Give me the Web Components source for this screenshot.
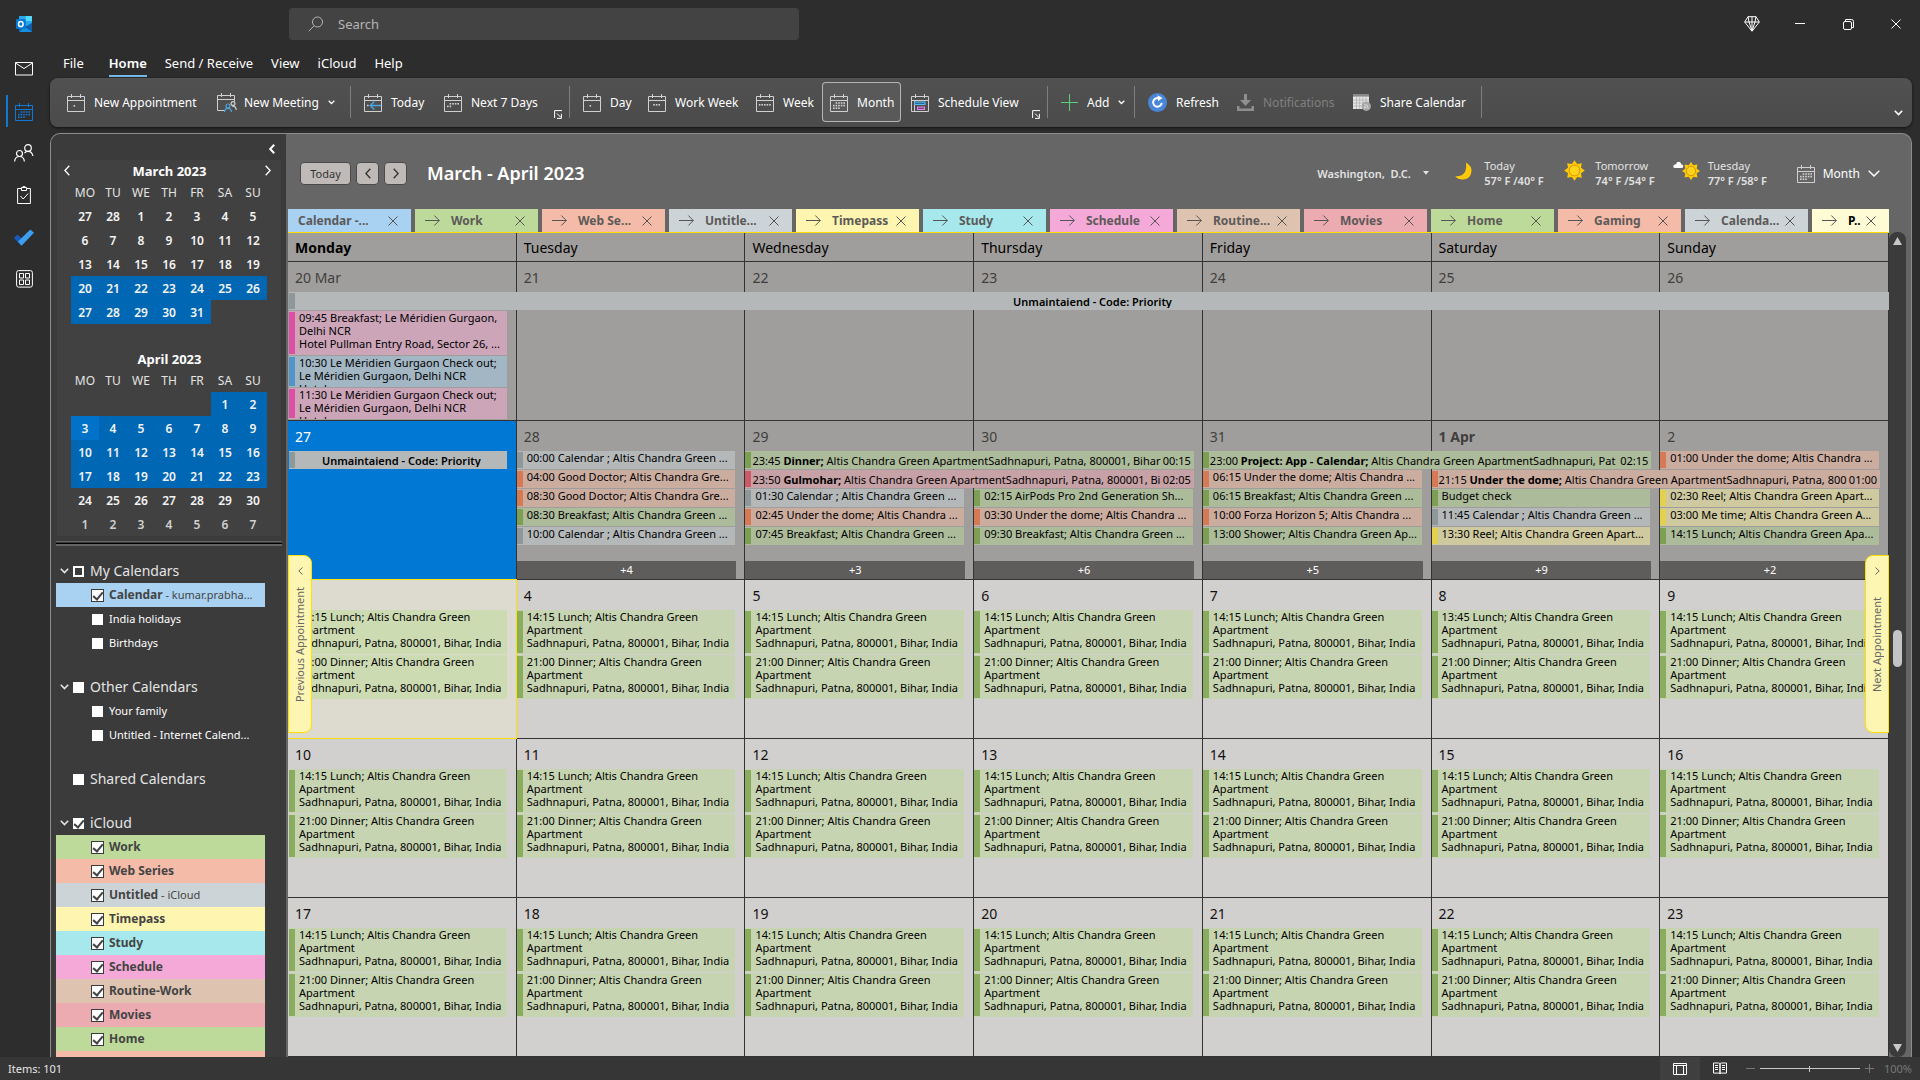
<!DOCTYPE html>
<html lang="en">
<head>
<meta charset="utf-8">
<title>Calendar - Outlook</title>
<style>
html,body{margin:0;height:100%}
body{font-family:"Noto Sans","Open Sans",sans-serif;font-size:12px;color:#fff;background:#2d2d2d;overflow:hidden}
</style>
</head>
<body>
<outlook-app></outlook-app>
<script>
const BASE='*{box-sizing:border-box}button{font:inherit;color:inherit;background:none;border:0;padding:0;margin:0;display:inline-flex;align-items:center;justify-content:center}';
function define(name,css,html){
  customElements.define(name,class extends HTMLElement{
    connectedCallback(){
      if(this.shadowRoot)return;
      const t=document.createElement('template');
      t.innerHTML='<style>'+BASE+css+'</style>'+(typeof html==='function'?html(this):html);
      this.attachShadow({mode:'open'}).append(t.content.cloneNode(true));
    }
  });
}

/* ---------- icons ---------- */
const frame='<path d="M.5 3.500h17v15H.5zM.5 7.500h17M4.500 1v4M13.500 1v4" fill="none" stroke="currentColor"/>';
const dots=(rows,c='currentColor')=>rows.map(([y,x0,n])=>Array.from({length:n},(_,i)=>`<rect x="${x0+i*2.6}" y="${y}" width="1.6" height="1.6" fill="${c}"/>`).join('')).join('');
const sun=(cx,cy,r)=>{let p='';for(let i=0;i<16;i++){const a=i*Math.PI/8-Math.PI/2,q=i%2?r*.68:r;p+=(i?'L':'M')+(cx+q*Math.cos(a)).toFixed(1)+' '+(cy+q*Math.sin(a)).toFixed(1)}
  return `<path d="${p}z" fill="#ffc905"/><circle cx="${cx}" cy="${cy}" r="${r*.52}" fill="#ffd21c" stroke="#c99200" stroke-width=".9"/>`};
const ICONS={
 outlook:[16,16,'<rect x="3" y="0" width="13" height="15.5" rx="1" fill="#1066b5"/><rect x="3" y="0" width="6.5" height="5" fill="#28a8ea"/><rect x="9.500" y="0" width="6.5" height="5" fill="#50d9ff"/><rect x="9.5" y="5" width="6.5" height="5" fill="#28a8ea"/><path d="M3 16l6-5 7-4v8.500q0 .5-.5.5z" fill="#1490df"/><path d="M16 7v9l-7-5z" fill="#0f5ea8"/><rect x="0" y="3" width="9.500" height="10" rx="1" fill="#0078d4"/><ellipse cx="4.800" cy="8" rx="2.300" ry="2.600" fill="none" stroke="#fff" stroke-width="1.500"/>'],
 mail:[18,14,'<path d="M.5.500h17v12.500H.5zM.5 1l8.500 5.500L17.500 1" fill="none" stroke="currentColor"/>'],
 cal:[18,19,frame+dots([[9.2,5.600,4],[11.800,3,5],[14.400,3,3]])],
 people:[20,18,'<g fill="none" stroke="currentColor" stroke-width="1.200"><circle cx="14" cy="4" r="3.300"/><circle cx="5.500" cy="9.500" r="3"/><path d="M.6 17.500q.5-5 4.900-5t4.900 5M10.500 9q1.500-1.700 3.500-1.700 4 0 4.900 4.700"/></g>'],
 tasks:[14,18,'<g fill="none" stroke="currentColor"><path d="M4 2.500H.6v15h12.800v-15H10"/><path d="M4.500 4.500v-3h5v3zM3.500 10l2.700 3 5-5.500"/><path d="M5.500 1q1.500-1.200 3 0"/></g>'],
 todo:[20,17,'<path d="M0 9l3.500-3.500L10 12l-3.500 4z" fill="#185abd"/><path d="M4 12.500L16.300.5l3.700 3.300-12.500 13z" fill="#3d9ff0"/>'],
 apps:[17,18,'<g fill="none" stroke="currentColor"><rect x=".6" y=".6" width="15.800" height="16.500" rx="2"/><path d="M3.500 3.500h4v4.500h-4zM9.500 3.500h4v4.500h-4zM3.500 10h4v4.500h-4zM9.500 10h4v4.500h-4z"/></g>'],
 search:[16,16,'<g fill="none" stroke="currentColor"><circle cx="9.500" cy="6" r="5"/><path d="M6 9.800L.8 15.200"/></g>'],
 diamond:[16,16,'<path d="M4 .7h8L15.300 6 8 15.300.7 6zM.7 6h14.600M4 .7L5 6l3 9M12 .7L11 6l-3 9M8 .7V15" fill="none" stroke="currentColor" stroke-width="1"/>'],
 min:[10,10,'<path d="M0 4.500h10" stroke="currentColor"/>'],
 restore:[11,11,'<path d="M2.500 2.500V.5h6q2 0 2 2v6h-2M.5 4q0-1.500 1.500-1.500h5q1.500 0 1.500 1.500v5q0 1.500-1.500 1.500H2Q.5 10.500.5 9z" fill="none" stroke="currentColor"/>'],
 close:[10,10,'<path d="M.5.500l9 9M9.500.500l-9 9" stroke="currentColor"/>'],
 day:[18,19,frame+dots([[12,6.500,1]])],
 meeting:[18,20,'<path d="M8 18.500H.5v-15h17v6M.5 7.500h17M4.500 1v4M13.500 1v4" fill="none" stroke="#d0d0d0"/><g fill="none" stroke-width="1.200"><g stroke="#4ea5e0"><circle cx="11" cy="14" r="2"/><path d="M7.500 20q.3-3.700 3.500-3.700t3.500 3.700"/></g><g stroke="#d0d0d0"><circle cx="16" cy="11.500" r="1.900"/><path d="M15 14.200q3.700-.8 4.300 3.800"/></g></g>'],
 today:[18,19,frame+'<path d="M17 12.500H6.500m3.800-4l-4 4 4 4" fill="none" stroke="#4ea5e0" stroke-width="1.400"/>'+dots([[11.700,3,1]])],
 next7:[18,19,frame+dots([[10,5.600,4],[12.600,3,2]])],
 work:[18,19,frame+dots([[11,5.200,3]])],
 week:[18,19,frame+dots([[11,2.800,5]])],
 sched:[18,19,frame+'<path d="M3.500 8v10" stroke="currentColor"/><rect x="3.500" y="9" width="10.500" height="2.500" fill="#2b6f9e" stroke="#5bb7f0"/><rect x="6.500" y="14" width="7" height="2.500" fill="#8d3e93" stroke="#d58be0"/>'],
 plus:[17,17,'<path d="M8.500 0v17M0 8.500h17" stroke="#5fd07a" stroke-width="1"/>'],
 refresh:[19,19,'<circle cx="9.500" cy="9.500" r="9.500" fill="#4a86d8"/><path d="M13.700 9.800a4.300 4.300 0 1 1-3-4.500" fill="none" stroke="#fff" stroke-width="2"/><path d="M9.500 2.300l5 2.700-4.500 3.300z" fill="#fff"/>'],
 notif:[17,17,'<path d="M7 0h3v6h4l-5.500 6L3 6h4zM0 12h2.500v2.500h12V12H17v5H0z" fill="#8e8e8e"/>'],
 share:[18,18,'<rect x="0" y="1" width="16" height="15" fill="#e6e6e6"/><rect x="0" y="1" width="16" height="2.600" fill="#8a8a8a"/><path d="M0 7h16M0 10h16M0 13h16M3.500 4v12M6.700 4v12M9.900 4v12M13 4v12" stroke="#aaa" stroke-width=".7"/><circle cx="13.300" cy="13.300" r="4.700" fill="#a6a6a6"/><path d="M11.500 15.500v-1.700m0-2.500q3.700.2 3.700 4.200m-3.700-2.200q1.700.2 1.700 2.200" fill="none" stroke="#e8e8e8" stroke-width=".8"/>'],
 launch:[8,9,'<path d="M.6 8V.6H8M3 3.500l4 4M7.400 3.800v4.600H3" fill="none" stroke="currentColor"/>'],
 down:[7,5,'<path d="M.7.7l2.800 2.800L6.300.7" fill="none" stroke="currentColor" stroke-width="1.300"/>'],
 downB:[9,6,'<path d="M.8.800l3.700 3.700L8.200.8" fill="none" stroke="currentColor" stroke-width="1.600"/>'],
 downL:[12,7,'<path d="M.7.700L6 6 11.300.7" fill="none" stroke="currentColor" stroke-width="1.500"/>'],
 left:[6,11,'<path d="M5.300.700L.9 5.500l4.400 4.800" fill="none" stroke="currentColor" stroke-width="1.300"/>'],
 right:[6,11,'<path d="M.7.700l4.400 4.800L.7 10.300" fill="none" stroke="currentColor" stroke-width="1.300"/>'],
 leftB:[6,10,'<path d="M5.200.800L1.200 5l4 4.200" fill="none" stroke="currentColor" stroke-width="2"/>'],
 leftS:[5,8,'<path d="M4.500.500L.8 4l3.700 3.500" fill="none" stroke="currentColor"/>'],
 rightS:[5,8,'<path d="M.5.500L4.200 4 .5 7.500" fill="none" stroke="currentColor"/>'],
 arrow:[15,12,'<path d="M0 5.500h14.300M9.300.500L14.300 5.500l-5 5" fill="none" stroke="currentColor"/>'],
 caret:[6,4,'<path d="M0 0h6L3 3.800z" fill="currentColor"/>'],
 moon:[17,18,'<path d="M11 .5q6 3.500 5.500 9-1 7.500-8 8Q3 17.800.3 14.200q8 .3 10-5 1.500-4 .7-8.700z" fill="#ffc905"/>'],
 sun:[21,21,sun(10.500,10.500,10.300)],
 partly:[27,21,sun(18,11,9)+'<path d="M2.500 8Q0 8 .3 6 .7 4.300 3 4.300 4 1.300 6.500 2q1.700.7 1.900 2.500 2 .2 1.900 2Q10 8 8.500 8z" fill="#fff"/>'],
 layout:[14,12,'<path d="M.5.500h13v11H.5zM.5 2.500h13M3.500 2.500v9M10.500 2.500v9" fill="none" stroke="currentColor"/>'],
 read:[14,13,'<path d="M.5 1h5q1.500 0 1.500 1v10q0-.9-1.500-.9h-5zM13.500 1h-5Q7 1 7 2v10q0-.9 1.500-.9h5zM2 3.500h3M2 5.500h3M2 7.500h3M9 3.500h3M9 5.500h3M9 7.500h3" fill="none" stroke="currentColor"/>'],
 tri:[9,8,'<path d="M4.500 0L9 8H0z" fill="currentColor"/>'],
 triD:[9,8,'<path d="M4.500 8L0 0h9z" fill="currentColor"/>']
};
define('ui-icon',':host{display:inline-flex;flex:none}svg{display:block;overflow:visible}',h=>{const[w,ht,b]=ICONS[h.getAttribute('name')];
  return `<svg width="${w}" height="${ht}" viewBox="0 0 ${w} ${ht}" aria-hidden="true">${b}</svg>`});

/* ---------- left rail ---------- */
define('rail-item',`:host{display:flex;height:42px;position:relative}button{flex:1;padding-right:2px}
:host([active]){color:#0f78d4}:host([active])::before{content:"";position:absolute;left:6px;top:5px;width:2px;height:32px;background:#0f78d4}`,
 h=>`<button aria-label="${h.getAttribute('label')}"><ui-icon name="${h.getAttribute('icon')}"></ui-icon></button>`);
define('nav-rail',':host{display:flex;flex-direction:column;width:50px;flex:none}.logo{height:48px;display:flex;align-items:center;justify-content:center;padding-right:2px}',
 `<div class="logo"><ui-icon name="outlook"></ui-icon></div>
 <rail-item icon="mail" label="Mail"></rail-item><rail-item icon="cal" label="Calendar" active></rail-item><rail-item icon="people" label="People"></rail-item>
 <rail-item icon="tasks" label="Tasks"></rail-item><rail-item icon="todo" label="To Do"></rail-item><rail-item icon="apps" label="More apps"></rail-item>`);

/* ---------- title bar + menu ---------- */
define('title-bar',`:host{display:flex;height:48px;align-items:center}
label{display:flex;align-items:center;gap:14px;margin-left:239px;width:510px;height:32px;padding:0 19px;background:#434343;border-radius:4px;color:#b5b5b5}
input{flex:1;background:none;border:0;outline:0;font:inherit;font-size:13px;color:inherit;padding:0}input::placeholder{color:#b5b5b5;opacity:1}
.win{margin-left:auto;display:flex}.win button{width:48px;height:32px}`,
 `<label><ui-icon name="search"></ui-icon><input type="search" placeholder="Search" aria-label="Search"></label>
 <div class="win"><button aria-label="Premium"><ui-icon name="diamond"></ui-icon></button><button aria-label="Minimize"><ui-icon name="min"></ui-icon></button><button aria-label="Restore"><ui-icon name="restore"></ui-icon></button><button aria-label="Close"><ui-icon name="close"></ui-icon></button></div>`);
define('menu-bar',`:host{display:flex;height:30px;padding-left:13px;align-items:center;font-size:13px}
nav{display:flex;gap:18px}button{height:24px;line-height:24px}.on{font-weight:600;box-shadow:0 2px #76b9ed;margin-left:7px}`,
 `<nav><button>File</button><button class="on">Home</button><button>Send / Receive</button><button>View</button><button>iCloud</button><button>Help</button></nav>`);

/* ---------- ribbon ---------- */
define('rb-button',`:host{display:flex;align-items:center;height:40px}
button{height:40px;width:100%;justify-content:flex-start;gap:9px;padding:0 0 0 8px;white-space:nowrap;border-radius:4px;color:#fff}
:host([pressed]){margin-right:2px}:host([pressed]) button{background:#595959;box-shadow:inset 0 0 0 1px #b4b4b4}:host([off]) button{color:#808080}ui-icon{color:#d0d0d0}
.dd{color:#fff}`,
 h=>{h.style.minWidth=h.getAttribute('w')+'px';
  return `<button ${h.hasAttribute('off')?'disabled':''}><ui-icon name="${h.getAttribute('icon')}"></ui-icon><slot></slot>${h.hasAttribute('dd')?'<ui-icon class="dd" name="down"></ui-icon>':''}</button>`});
define('ribbon-bar',`:host{display:flex;align-items:center;height:49px;margin-right:8px;padding:0 9px 1px;background:linear-gradient(#515151,#4b4b4b);border-radius:8px;box-shadow:0 1px 3px #111}
hr{width:1px;height:32px;border:0;background:#7e7e7e;margin:0 5px 0 7px}.l{align-self:flex-end;margin:0 0 7px 8px}.c{margin-left:auto;align-self:flex-end;margin-bottom:10px}`,
 `<rb-button icon="day" w="150">New Appointment</rb-button><rb-button icon="meeting" dd w="134">New Meeting</rb-button><hr>
 <rb-button icon="today" w="80">Today</rb-button><rb-button icon="next7" w="110">Next 7 Days</rb-button><button class="l" aria-label="Go to options"><ui-icon name="launch"></ui-icon></button><hr>
 <rb-button icon="day" w="65">Day</rb-button><rb-button icon="work" w="108">Work Week</rb-button><rb-button icon="week" w="74">Week</rb-button><rb-button icon="cal" pressed w="79">Month</rb-button><rb-button icon="sched" w="121">Schedule View</rb-button><button class="l" aria-label="Arrange options"><ui-icon name="launch"></ui-icon></button><hr>
 <rb-button icon="plus" dd w="74">Add</rb-button><hr><rb-button icon="refresh" w="89">Refresh</rb-button><rb-button icon="notif" off w="116">Notifications</rb-button><rb-button icon="share" w="129">Share Calendar</rb-button><hr>
 <button class="c" aria-label="Ribbon options"><ui-icon name="downB"></ui-icon></button>`);

/* ---------- sidebar ---------- */
define('mini-month',`:host{display:block;padding:0 14px}
header{display:flex;align-items:center;height:21px;margin:0 -8px 0 -7px;font-weight:700;font-size:13px}header span{flex:1;text-align:center}header ui-icon{width:10px}
table{border-collapse:collapse;width:100%;table-layout:fixed}th,td{padding:0;text-align:center;font-size:12px;height:24px;line-height:17px}th{height:23px;font-weight:400;color:#e4e4e4}td{font-weight:600;color:#f4f4f4}
.s{background:#0067b5}.t{background:#0072c9}.o{color:#d0d0d0}`,
 h=>{const n=h.hasAttribute('nav'),d=h.getAttribute('days').split(',');let r='';
  d.forEach((x,i)=>{if(i%7==0)r+='<tr>';const m=x.match(/^(\d*)(\w*)$/);r+=`<td class="${[...m[2]].join(' ')}">${m[1]}</td>`;if(i%7==6)r+='</tr>'});
  return `<header>${n?'<button aria-label="Previous month"><ui-icon name="left"></ui-icon></button>':''}<span>${h.getAttribute('month')}</span>${n?'<button aria-label="Next month"><ui-icon name="right"></ui-icon></button>':''}</header>
  <table><thead><tr>${['MO','TU','WE','TH','FR','SA','SU'].map(x=>`<th>${x}</th>`).join('')}</tr></thead><tbody>${r}</tbody></table>`});
const CHECK=`input{appearance:none;margin:0;flex:none;background:#fff;display:grid;place-items:center}
input:checked::before{content:"";width:4px;height:8px;margin-bottom:3px;border:solid #444;border-width:0 2px 2px 0;transform:rotate(40deg)}`;
define('cal-item',CHECK+`:host{display:block}label{display:flex;align-items:center;height:24px;padding-left:35px;gap:5px;background:var(--c,transparent);font-size:11px;white-space:nowrap;color:#fff}
input{width:13px;height:13px;background-clip:padding-box;border:1px solid #3b3b3b}span{padding-bottom:1px}
:host([on]) label{color:#444}:host([on]) b{font-size:12px;font-weight:700}b{font-weight:400}small{font-size:11px}`,
 h=>`<label style="${h.hasAttribute('c')?'--c:'+h.getAttribute('c'):''}"><input type="checkbox" ${h.hasAttribute('on')?'checked':''}><span><b>${h.getAttribute('name')}</b>${h.hasAttribute('sub')?' - <small>'+h.getAttribute('sub')+'</small>':''}</span></label>`);
define('cal-group',CHECK+`:host{display:block;margin-bottom:20px}.h{display:flex;align-items:center;height:24px;padding-left:4px;font-size:14px;color:#e4e4e4}
label{display:flex;align-items:center;gap:6px}input{width:11px;height:11px}.g{width:13px;display:flex}:host([mixed]) input{background:#3b3b3b;border:2px solid #fff}span{padding-bottom:2px}`,
 h=>`<div class="h"><div class="g">${h.hasAttribute('leaf')?'':'<button aria-label="Collapse group"><ui-icon name="downB"></ui-icon></button>'}</div><label><input type="checkbox" ${h.hasAttribute('on')?'checked':''}><span>${h.getAttribute('name')}</span></label></div><slot></slot>`);
const seq=(a,b,c='')=>Array.from({length:b-a+1},(_,i)=>a+i+c).join(',');
define('side-bar',`:host{display:flex;flex-direction:column;width:235px;flex:none;background:#3b3b3b;overflow:hidden}
.top{height:26px;display:flex;justify-content:flex-end;padding:3px 11px 0 0;flex:none}
.nav{background:#414141;margin:0 5px 0 6px;flex:none}.nav mini-month+mini-month{margin-top:24px}
.split{height:5px;margin:5px 4px 13px 5px;border:solid #646464;border-width:1px 0 2px;flex:none;background:linear-gradient(#3b3b3b 50%,#000 50%)}
.list{padding:0 21px 0 5px}`,
 `<div class="top"><button aria-label="Minimize folder pane"><ui-icon name="leftB"></ui-icon></button></div>
 <div class="nav"><mini-month nav month="March 2023" days="${seq(27,28)},${seq(1,19)},${seq(20,31,'s')},,"></mini-month>
 <mini-month month="April 2023" days=",,,,,${seq(1,2,'s')},3t,${seq(4,23,'s')},${seq(24,30)},${seq(1,7,'o')}"></mini-month></div>
 <div class="split"></div>
 <div class="list">
 <cal-group name="My Calendars" mixed><cal-item on c="#a8d1f2" name="Calendar" sub="kumar.prabha..."></cal-item><cal-item name="India holidays"></cal-item><cal-item name="Birthdays"></cal-item></cal-group>
 <cal-group name="Other Calendars"><cal-item name="Your family"></cal-item><cal-item name="Untitled" sub="Internet Calend..."></cal-item></cal-group>
 <cal-group name="Shared Calendars" leaf></cal-group>
 <cal-group name="iCloud" on>${[['Work','#bdda9b'],['Web Series','#f4bba8'],['Untitled','#cdd4d7','iCloud'],['Timepass','#fdf5b0'],['Study','#a6e8ec'],['Schedule','#f5a9d9'],['Routine-Work','#dec3b1'],['Movies','#ecaab1'],['Home','#bdda9b'],['Gaming','#f4bba8']].map(([n,c,s])=>`<cal-item on name="${n}" c="${c}" ${s?`sub="${s}"`:''}></cal-item>`).join('')}</cal-group>
 </div>`);

/* ---------- calendar header ---------- */
define('weather-day',`:host{display:flex;align-items:center;width:93px;font-size:11px;line-height:15px;color:#e2e2e2;gap:8px}.i{width:28px;display:flex;justify-content:center;padding-bottom:5px}b{display:block;font-weight:600;white-space:nowrap}`,
 h=>`<span class="i"><ui-icon name="${h.getAttribute('icon')}"></ui-icon></span><div><slot></slot><b>${h.getAttribute('temp')}</b></div>`);
define('view-header',`:host{display:flex;align-items:center;height:75px;padding:3px 31px 0 12px}
.b{height:23px;background:#bfbab8;color:#333;border:1px solid #4a4a4a;border-radius:4px;font-size:11px}.b+.b{margin-left:5px}
.t{width:51px}.n{width:23px}h1{margin:0 auto 0 20px;font-size:18px;font-weight:600;line-height:24px}
.city{font-size:11px;font-weight:600;color:#e2e2e2;gap:12px;white-space:pre}.w{display:flex;gap:18px;margin-left:22px}.v{gap:8px;margin-left:31px}.v ui-icon:first-child{color:#d0d0d0}`,
 `<button class="b t">Today</button><button class="b n" aria-label="Back"><ui-icon name="left"></ui-icon></button><button class="b n" aria-label="Forward"><ui-icon name="right"></ui-icon></button>
 <h1>March - April 2023</h1><button class="city">Washington,  D.C.<ui-icon name="caret"></ui-icon></button>
 <div class="w"><weather-day icon="moon" temp="57° F /40° F">Today</weather-day><weather-day icon="sun" temp="74° F /54° F">Tomorrow</weather-day><weather-day icon="partly" temp="77° F /58° F">Tuesday</weather-day></div>
 <button class="v"><ui-icon name="cal"></ui-icon>Month<ui-icon name="downL"></ui-icon></button>`);
define('cal-tab',`:host{display:flex;align-items:center;width:123px;height:23px;flex:none;padding:0 13px 0 10px;background:var(--c);color:#5c5a58;font-weight:700;font-size:12px;white-space:nowrap}
:host([last]){width:auto;flex:1;color:#000}ui-icon{color:#555}.a{margin-right:11px}span{flex:1;min-width:0}`,
 h=>`${h.hasAttribute('first')?'':'<ui-icon class="a" name="arrow"></ui-icon>'}<span><slot></slot></span><button aria-label="Close"><ui-icon name="close"></ui-icon></button>`);

/* ---------- month grid ---------- */
/* category colours: [body, leading bar] */
const PAL={g:['#acbb9a','#7c9f54'],o:['#cbada0','#d67a55'],s:['#b4b8b9','#8e9799'],r:['#c6a1a5','#cb5a66'],y:['#cfc99f','#e3d04f'],p:['#cca5b9','#dc4fa5'],b:['#a3b6c4','#5094c8'],G:['#c7d4b2','#8aac5f']};
define('cal-event',`:host{display:flex;min-width:0;margin-right:10px;overflow:hidden;background:var(--bg);color:#000;font-size:11px;line-height:13px}
:host::before{content:"";flex:none;width:6px;background:var(--bar);margin:1px 0}:host([first]){margin-left:1px}
.t{flex:1;min-width:0;padding:0 0 0 4px;white-space:pre;overflow:hidden}
:host([span]){margin-right:9px}:host([span]) .t,:host([mid]) .t{align-self:center;padding:0 0 0 1px}:host([mid]) .t{text-align:center}:host([span]) .t:last-child{flex:none;padding:0 3px 0 2px}
:host([span]) b{font-weight:600}:host([mid]) .t{font-weight:600}:host([full]){margin-right:0}`,
 h=>{const[a,b]=PAL[h.getAttribute('k')];h.style.setProperty('--bg',h.hasAttribute('today')?'#cddbb3':a);h.style.setProperty('--bar',b);
  return `<div class="t"><slot></slot></div>${h.hasAttribute('end')?`<div class="t">${h.getAttribute('end')}</div>`:''}`});
define('week-row',`:host{display:grid;grid-template-columns:repeat(7,minmax(0,1fr));flex:1;row-gap:1px;min-height:0}
.d{grid-row:1/-1;border:solid #333;border-width:0 1px 1px 0;padding:6px 0 0 7px;font-size:14px;line-height:20px}
.past{background:#a09e9c;color:#3f3e3d}.next{background:#d2d0ce;color:#111}.sel{background:#0078d4;color:#fff}.today{background:#dddad0;color:#111;box-shadow:0 -1px #ffe000;border-color:#ffe000;z-index:1}
.m{font-weight:700}.more{margin:0 9px 1px 0;background:#5f5d5b;color:#fff;font-size:11px;line-height:18px}
cal-event{z-index:2}`,
 h=>{const w=WEEKS[+h.getAttribute('i')];h.style.gridTemplateRows=w.rows;const n=w.rows.split(' ').length;
  return w.days.map((d,c)=>`<div class="d ${w.cls[c]||w.cls[0]} ${/^1 /.test(d)?'m':''}" style="grid-column:${c+1}">${d}</div>`).join('')
  +w.ev.map(([c,r,k,t,o={}])=>`<cal-event k="${k}" style="grid-column:${c}/span ${o.span||1};grid-row:${r+1}" ${c==1?'first':''} ${o.attr||''} ${o.end?`span end="${o.end}"`:''}>${t}</cal-event>`).join('')
  +(w.more||[]).map(([c,n2])=>`<button class="more" style="grid-column:${c};grid-row:${n}">${n2}</button>`).join('')});
const alt=(t,n)=>`${t} ${n}; Altis Chandra Green\nApartment\nSadhnapuri, Patna, 800001, Bihar, India`;
const plain=(s,cls)=>({rows:'29px 44px 44px 1fr',cls,days:Array.from({length:7},(_,i)=>s+i),
  ev:Array.from({length:7},(_,i)=>[[i+1,1,'G',alt(s+i==8?'13:45':'14:15','Lunch'),{attr:s+i==3?'today':''}],[i+1,2,'G',alt('21:00','Dinner'),{attr:s+i==3?'today':''}]]).flat()});
const A='Altis Chandra Green ApartmentSadhnapuri, ';
const WEEKS=[
 {rows:'29px 18px 44px 31px 31px 1fr',cls:['past'],days:['20 Mar',21,22,23,24,25,26],ev:[
  [1,1,'s','Unmaintaiend - Code: Priority',{span:7,attr:'mid full'}],
  [1,2,'p','09:45 Breakfast; Le Méridien Gurgaon,\nDelhi NCR\nHotel Pullman Entry Road, Sector 26, ...'],
  [1,3,'b','10:30 Le Méridien Gurgaon Check out;\nLe Méridien Gurgaon, Delhi NCR\nHotel'],
  [1,4,'p','11:30 Le Méridien Gurgaon Check out;\nLe Méridien Gurgaon, Delhi NCR\nHotel']]},
 {rows:'29px 18px 18px 18px 18px 18px 1fr 19px',cls:['sel','past','past','past','past','past','past'],days:[27,28,29,30,31,'1 Apr',2],ev:[
  [1,1,'s','Unmaintaiend - Code: Priority',{attr:'mid'}],
  [2,1,'s','00:00 Calendar ; Altis Chandra Green ...'],[2,2,'o','04:00 Good Doctor; Altis Chandra Gre...'],[2,3,'o','08:30 Good Doctor; Altis Chandra Gre...'],[2,4,'g','08:30 Breakfast; Altis Chandra Green ...'],[2,5,'s','10:00 Calendar ; Altis Chandra Green ...'],
  [3,1,'g','23:45 <b>Dinner;</b> '+A+'Patna, 800001, Bihar',{span:2,end:'00:15'}],[3,2,'r','23:50 <b>Gulmohar;</b> '+A+'Patna, 800001, Bi',{span:2,end:'02:05'}],
  [3,3,'s','01:30 Calendar ; Altis Chandra Green ...'],[3,4,'o','02:45 Under the dome; Altis Chandra ...'],[3,5,'g','07:45 Breakfast; Altis Chandra Green ...'],
  [4,3,'g','02:15 AirPods Pro 2nd Generation Sh...'],[4,4,'o','03:30 Under the dome; Altis Chandra ...'],[4,5,'g','09:30 Breakfast; Altis Chandra Green ...'],
  [5,1,'g','23:00 <b>Project: App - Calendar;</b> '+A+'Pat',{span:2,end:'02:15'}],[5,2,'o','06:15 Under the dome; Altis Chandra ...'],[5,3,'g','06:15 Breakfast; Altis Chandra Green ...'],[5,4,'o','10:00 Forza Horizon 5; Altis Chandra ...'],[5,5,'g','13:00 Shower; Altis Chandra Green Ap...'],
  [6,2,'o','21:15 <b>Under the dome;</b> '+A+'Patna, 800',{span:2,end:'01:00'}],[6,3,'g','Budget check'],[6,4,'s','11:45 Calendar ; Altis Chandra Green ...'],[6,5,'y','13:30 Reel; Altis Chandra Green Apart...'],
  [7,1,'o','01:00 Under the dome; Altis Chandra ...'],[7,3,'y','02:30 Reel; Altis Chandra Green Apart...'],[7,4,'y','03:00 Me time; Altis Chandra Green A...'],[7,5,'g','14:15 Lunch; Altis Chandra Green Apa...']],
  more:[[2,'+4'],[3,'+3'],[4,'+6'],[5,'+5'],[6,'+9'],[7,'+2']]},
 plain(3,['today','next','next','next','next','next','next']),plain(10,['next']),plain(17,['next'])];
WEEKS[2].days[0]='';
define('edge-tab',`:host{position:absolute;top:322px;z-index:5;display:block}:host([side=prev]){left:0}:host([side=next]){right:0}
button{width:24px;height:178px;flex-direction:column;justify-content:flex-start;padding-top:11px;gap:12px;background:#fdf6b2;border:1px solid #ffe000;color:#666;font-size:11px}
:host([side=prev]) button{border-radius:0 8px 8px 0}:host([side=next]) button{border-radius:8px 0 0 8px;gap:22px}
span{writing-mode:vertical-rl;rotate:180deg;line-height:16px}`,
 h=>`<button><ui-icon name="${h.getAttribute('side')=='prev'?'leftS':'rightS'}"></ui-icon><span><slot></slot></span></button>`);
define('month-grid',`:host{display:flex;flex-direction:column;flex:1;min-width:0;position:relative;border-top:1px solid #ffe000}
.h{display:grid;grid-template-columns:repeat(7,minmax(0,1fr));height:29px;flex:none;background:#a09e9c;color:#000;font-size:14px;line-height:29px}
.h div{height:29px;padding-left:7px;border:solid #333;border-width:0 1px 1px 0}.h div:first-child{font-weight:700}`,
 `<div class="h">${['Monday','Tuesday','Wednesday','Thursday','Friday','Saturday','Sunday'].map(d=>`<div>${d}</div>`).join('')}</div>
 ${[0,1,2,3,4].map(i=>`<week-row i="${i}"></week-row>`).join('')}
 <edge-tab side="prev">Previous Appointment</edge-tab><edge-tab side="next">Next Appointment</edge-tab>`);
define('scroll-rail',`:host{display:flex;flex-direction:column;align-items:center;width:17px;flex:none;background:#3b3b3b;border-radius:8px;padding:5px 0;color:#c8c8c8}
i{width:9px;height:37px;border-radius:5px;background:#c4c4c4}.a{flex:385}.b{flex:377}`,
 `<ui-icon name="tri"></ui-icon><div class="a"></div><i></i><div class="b"></div><ui-icon name="triD"></ui-icon>`);
define('calendar-view',`:host{display:flex;flex-direction:column;flex:1;min-width:0;margin-left:2px}
.tabs{display:flex;gap:4px;margin-right:22px}.body{display:flex;flex:1;min-height:0;padding-right:5px}`,
 `<view-header></view-header><div class="tabs">${[['Calendar -...','#a8d1f2'],['Work','#bdda9b'],['Web Se...','#f4bba8'],['Untitle...','#cdd4d7'],['Timepass','#fdf5b0'],['Study','#a6e8ec'],['Schedule','#f5a9d9'],['Routine...','#dec3b1'],['Movies','#ecaab1'],['Home','#bdda9b'],['Gaming','#f4bba8'],['Calenda...','#cdd4d7'],['P..','#fffbd5']].map(([n,c],i,a)=>`<cal-tab style="--c:${c}" ${i?'':'first'} ${i==a.length-1?'last':''}>${n}</cal-tab>`).join('')}</div>
 <div class="body"><month-grid></month-grid><scroll-rail></scroll-rail></div>`);

/* ---------- status bar + shell ---------- */
define('status-bar',`:host{display:flex;align-items:center;height:23px;background:#363636;padding:0 8px;flex:none;color:#e6e6e6;font-size:11px}
.v{width:40px;height:23px;color:#fff}.on{background:#3f3f3f}.v:first-of-type{margin-left:auto}
.z{display:flex;align-items:center;gap:5px;margin-left:6px;color:#777}input{appearance:none;width:100px;height:8px;margin:0;background:linear-gradient(#c8c8c8,#c8c8c8) center/100% 1px no-repeat}
input::-webkit-slider-thumb{appearance:none;width:1px;height:6px;background:#c8c8c8}.z button{width:9px;height:9px}output{margin-left:5px}`,
 `<span>Items: 101</span><button class="v on" aria-label="Normal view"><ui-icon name="layout"></ui-icon></button><button class="v" aria-label="Reading view"><ui-icon name="read"></ui-icon></button>
 <div class="z"><button aria-label="Zoom out"><svg width="9" height="9"><path d="M0 4.500h9" stroke="#777"/></svg></button><input type="range" aria-label="Zoom" value="50"><button aria-label="Zoom in"><svg width="9" height="9"><path d="M0 4.500h9M4.500 0v9" stroke="#777"/></svg></button><output>100%</output></div>`);
define('outlook-app',`:host{display:flex;flex-direction:column;height:100vh}
.m{display:flex;flex:1;min-height:0}.c{display:flex;flex-direction:column;flex:1;min-width:0}
.p{display:flex;flex:1;min-height:0;margin:6px 8px 0 0;background:#666;border:1px solid #8c8c8c;border-bottom:0;border-radius:10px 10px 0 0;overflow:hidden}`,
 `<div class="m"><nav-rail></nav-rail><div class="c"><title-bar></title-bar><menu-bar></menu-bar><ribbon-bar></ribbon-bar>
 <div class="p"><side-bar></side-bar><calendar-view></calendar-view></div></div></div><status-bar></status-bar>`);
</script>
</body>
</html>
